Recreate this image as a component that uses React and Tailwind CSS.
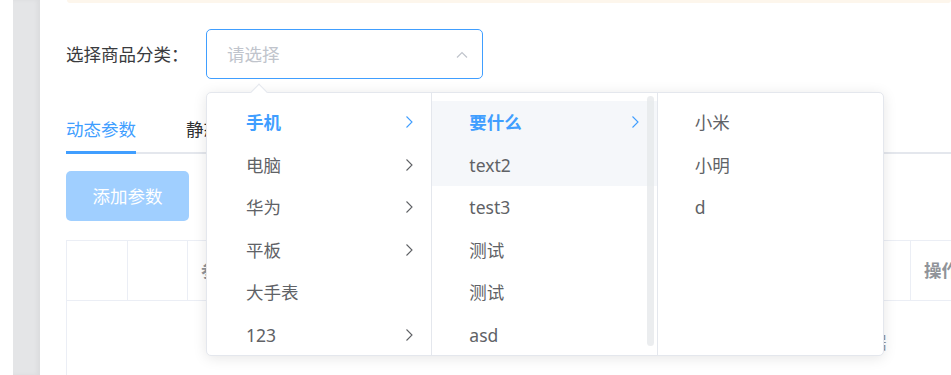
import React from 'react';

const font = "font-['Noto_Sans','Noto_Sans_CJK_SC',sans-serif]";

const col1 = [
  { label: '手机', active: true, more: true },
  { label: '电脑', more: true },
  { label: '华为', more: true },
  { label: '平板', more: true },
  { label: '大手表' },
  { label: '123', more: true },
];

const col2 = [
  { label: '要什么', active: true, more: true, hover: true },
  { label: 'text2', hover: true },
  { label: 'test3' },
  { label: '测试' },
  { label: '测试' },
  { label: 'asd' },
];

const col3 = [{ label: '小米' }, { label: '小明' }, { label: 'd' }];

const Chevron = ({ active }) => (
  <svg width="8" height="13" viewBox="0 0 8 13" className="absolute right-[18px] top-1/2 -translate-y-1/2">
    <polyline points="1.5,1 7,6.5 1.5,12" fill="none" stroke={active ? '#409eff' : '#606266'} strokeWidth="1.1" />
  </svg>
);

const Menu = ({ items, pad, last, scroll }) => (
  <div className={`relative w-[226px] h-full overflow-hidden pt-2 ${last ? '' : 'border-r border-[#e4e7ed]'}`}>
    {items.map((it, i) => (
      <div
        key={i}
        className={`relative h-[42.5px] flex items-center ${pad} ${it.hover ? 'bg-[#f5f7fa]' : ''} ${it.active ? 'text-[#409eff] font-bold' : 'text-[#606266]'}`}
      >
        {it.label}
        {it.more && <Chevron active={it.active} />}
      </div>
    ))}
    {scroll && <div className="absolute right-[3px] top-[3px] w-[7px] h-[250px] rounded-full bg-[#e6e8eb]/80" />}
  </div>
);

export default function App() {
  return (
    <div className={`w-[951px] h-[375px] overflow-hidden bg-white flex text-[17.5px] ${font}`}>
      <div className="w-[13px] bg-white shrink-0" />
      <div className="w-[27px] bg-[#e4e5e7] shrink-0 shadow-[inset_-3px_0_4px_rgba(0,0,0,0.04)]" />
      <div className="flex-1 relative bg-white pl-[26px] min-w-0">
        <div className="h-[3px] bg-[#fdf6ec] rounded-b-[4px] ml-px" />

        {/* 选择分类 */}
        <div className="mt-[26px] flex items-center h-[50px]">
          <span className="text-[#3a3b3e] w-[140px]">选择商品分类：</span>
          <div className="relative">
            <div className="w-[277px] h-[50px] border border-[#409eff] rounded-[5px] flex items-center pl-5 pr-[14px] justify-between">
              <span className="text-[#c0c4cc]">请选择</span>
              <svg width="12" height="7" viewBox="0 0 12 7">
                <polyline points="1,6.5 6,1.5 11,6.5" fill="none" stroke="#c0c4cc" strokeWidth="1.2" />
              </svg>
            </div>

            {/* 级联下拉 */}
            <div className="absolute left-0 top-[63px] z-10 w-[678px] h-[264px] bg-white border border-[#e4e7ed] rounded-[5px] shadow-[0_2px_14px_rgba(0,0,0,0.1)] flex">
              <div className="absolute -top-[7px] left-[46px] w-3 h-3 bg-white border-l border-t border-[#e4e7ed] rotate-45" />
              <Menu items={col1} pad="pl-[39px]" />
              <Menu items={col2} pad="pl-[37px]" scroll />
              <Menu items={col3} pad="pl-[37px]" last />
            </div>
          </div>
        </div>

        {/* 标签页 */}
        <div className="mt-[25px] relative h-[50px] flex items-center">
          <div className="relative h-full flex items-center text-[#409eff] pr-[25px]">
            动态参数
            <div className="absolute left-0 bottom-0 w-[70px] h-[3px] bg-[#409eff] z-[1]" />
          </div>
          <div className="h-full flex items-center text-[#303133] pl-[25px]">静态属性</div>
          <div className="absolute left-0 -right-[30px] bottom-0 h-[2.5px] bg-[#e4e7ed]" />
        </div>

        <button className="mt-[17px] w-[123px] h-[50px] rounded-[5px] bg-[#a0cfff] text-white">添加参数</button>

        {/* 表格 */}
        <div className="mt-[19px] w-[1570px] border-l border-t border-[#ebeef5]">
          <div className="flex h-[60px] border-b border-[#ebeef5] text-[#909399] font-bold">
            <div className="w-[61px] border-r border-[#ebeef5]" />
            <div className="w-[60px] border-r border-[#ebeef5]" />
            <div className="w-[723px] border-r border-[#ebeef5] flex items-center pl-[13px]">参数名称</div>
            <div className="flex-1 flex items-center pl-[13px]">操作</div>
          </div>
          <div className="h-[82px] flex items-center justify-center text-[#909399]">暂无数据</div>
        </div>
      </div>
    </div>
  );
}
